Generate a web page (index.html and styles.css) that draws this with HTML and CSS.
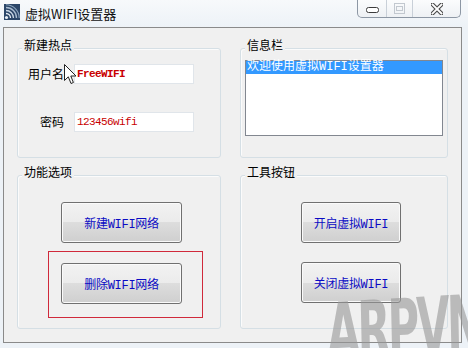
FILE: index.html
```html
<!DOCTYPE html>
<html>
<head>
    <title>虚拟WIFI设置器</title>
    <link rel="stylesheet" href="styles.css">
</head>
<body>
    <div class="window">
        <!-- Title bar -->
        <div class="titlebar">
            <svg class="appIcon" width="16" height="16" viewBox="0 0 16 16">
                <rect x="0" y="0" width="16" height="16" fill="#2b4668"/>
                <circle cx="2.5" cy="13.5" r="1.6" fill="#e8eef5"/>
                <path d="M2 9.5 A4.5 4.5 0 0 1 6.5 14" stroke="#e8eef5" stroke-width="1.3" fill="none"/>
                <path d="M2 6.5 A7.5 7.5 0 0 1 9.5 14" stroke="#c9d6e4" stroke-width="1.3" fill="none"/>
                <path d="M2 3.5 A10.5 10.5 0 0 1 12.5 14" stroke="#a9bcd1" stroke-width="1.3" fill="none"/>
                <path d="M2 0.8 A13.2 13.2 0 0 1 15.2 14" stroke="#8aa3bd" stroke-width="1.1" fill="none"/>
            </svg>
            <span class="title">虚拟WIFI设置器</span>
            <div class="captionButtons">
                <div class="capBtn minBtn">
                    <svg width="13" height="6" viewBox="0 0 13 6">
                        <rect x="0.5" y="0.5" width="12" height="5" rx="2" fill="#fff" stroke="#3c3c3c"/>
                    </svg>
                </div>
                <div class="capBtn maxBtn">
                    <svg width="11" height="11" viewBox="0 0 11 11">
                        <rect x="0.5" y="0.5" width="10" height="10" fill="none" stroke="#c2c8cf"/>
                        <rect x="2.5" y="3.5" width="6" height="4" fill="none" stroke="#c2c8cf"/>
                    </svg>
                </div>
                <div class="capBtn closeBtn">
                    <svg width="12" height="12" viewBox="0 0 12 12">
                        <path d="M1.5 1.5 L10.5 10.5 M10.5 1.5 L1.5 10.5" stroke="#4a4a4a" stroke-width="4" stroke-linecap="square"/>
                        <path d="M1.5 1.5 L10.5 10.5 M10.5 1.5 L1.5 10.5" stroke="#ffffff" stroke-width="1.8" stroke-linecap="square"/>
                    </svg>
                </div>
            </div>
        </div>

        <!-- Client area -->
        <div class="client">
            <div class="groupGrid">
                <div class="group hotspot">
                    <div class="legend">新建热点</div>
                    <div class="fieldRow firstRow">
                        <label class="fieldLabel" for="ssid">用户名</label>
                        <input class="textBox bold" id="ssid" type="text" value="FreeWIFI">
                    </div>
                    <div class="fieldRow secondRow">
                        <label class="fieldLabel" for="pwd">密码</label>
                        <input class="textBox" id="pwd" type="text" value="123456wifi">
                    </div>
                </div>

                <div class="group info">
                    <div class="legend">信息栏</div>
                    <div class="listBox">
                        <div class="listItem selected">欢迎使用虚拟WIFI设置器</div>
                    </div>
                </div>

                <div class="group options">
                    <div class="legend">功能选项</div>
                    <button class="winButton leftButton">新建WIFI网络</button>
                    <div class="highlightBox">
                        <button class="winButton">删除WIFI网络</button>
                    </div>
                </div>

                <div class="group tools">
                    <div class="legend">工具按钮</div>
                    <button class="winButton rightButton">开启虚拟WIFI</button>
                    <button class="winButton rightButton lower">关闭虚拟WIFI</button>
                </div>
            </div>
        </div>

        <!-- Mouse pointer over the username field -->
        <svg class="pointer" width="13" height="21" viewBox="0 0 13 21">
            <path d="M0.5 0.5 L0.5 16.5 L4.3 12.8 L7 19.5 L9.4 18.5 L6.8 12 L12 12 Z"
                  fill="#ffffff" stroke="#222" stroke-width="1" stroke-linejoin="round"/>
        </svg>

        <!-- Site watermark -->
        <div class="watermark">ARPVN</div>
    </div>
</body>
</html>
```

FILE: styles.css
```css
body {
    margin: 0;
    width: 468px;
    height: 348px;
    overflow: hidden;
    background: #edf2f7;
    font-family: "Noto Sans CJK SC", sans-serif;
    font-size: 12px;
    color: #000;
}

.window {
    position: relative;
    height: 348px;
    overflow: hidden;
}

/* Title bar */
.titlebar {
    display: flex;
    align-items: flex-start;
    height: 27px;
    background: linear-gradient(#f7f9fb, #edf2f7);
}

.appIcon {
    margin: 4px 0 0 4px;
}

.title {
    margin: 6px 0 0 5px;
    font-size: 13px;
    line-height: 16px;
    color: #111;
}

.captionButtons {
    display: flex;
    margin-left: auto;
    margin-right: 7px;
    height: 17px;
    border: 1px solid #8d97a4;
    border-top: none;
    border-radius: 0 0 5px 5px;
    background: linear-gradient(#fbfcfd, #eef1f4);
}

.capBtn {
    display: flex;
    justify-content: center;
    align-items: center;
    height: 17px;
}

.minBtn {
    width: 28px;
    border-right: 1px solid #c9d0d8;
}

.minBtn svg {
    margin-top: 3px;
}

.maxBtn {
    width: 25px;
    border-right: 1px solid #c9d0d8;
}

.closeBtn {
    width: 47px;
}

/* Client area */
.client {
    margin: 0 6px 0 3px;
    height: 316px;
    box-sizing: border-box;
    border: 1px solid #8a8a8a;
    background: #f0f0f0;
    padding: 20px 0 0 13px;
}

.groupGrid {
    display: grid;
    grid-template-columns: 204px 208px;
    grid-template-rows: 110px 154px;
    column-gap: 19px;
    row-gap: 17px;
}

.group {
    border: 1px solid #d5dfe5;
    border-radius: 3px;
    box-shadow: inset 1px 1px 0 #fbfbfb;
}

.legend {
    width: fit-content;
    margin: -10px 0 0 4px;
    padding: 0 2px;
    line-height: 12px;
    background: #f0f0f0;
}

/* Hotspot fields */
.fieldRow {
    display: flex;
    align-items: center;
}

.firstRow {
    margin-top: 13px;
}

.secondRow {
    margin-top: 28px;
}

.fieldLabel {
    width: 46px;
    text-align: right;
    line-height: 14px;
}

.textBox {
    width: 120px;
    height: 20px;
    box-sizing: border-box;
    margin: 0 0 0 10px;
    padding: 0 0 0 2px;
    border: 1px solid #e0e5ea;
    background: #fff;
    color: #c80000;
    font-family: "Liberation Mono", monospace;
    font-size: 11px;
    letter-spacing: -0.6px;
    outline: none;
}

.textBox.bold {
    font-weight: bold;
}

/* Info list */
.listBox {
    margin: 9px 0 0 4px;
    width: 198px;
    height: 76px;
    box-sizing: border-box;
    border: 1px solid #828790;
    background: #fff;
}

.listItem {
    height: 13px;
    line-height: 13px;
    padding-left: 1px;
    font-family: "Liberation Mono", "Noto Sans CJK SC", monospace;
    font-size: 12px;
    white-space: nowrap;
}

.listItem.selected {
    background: #3399ff;
    color: #fff;
}

/* Buttons */
.winButton {
    display: block;
    width: 121px;
    height: 41px;
    padding: 0;
    border: 1px solid #707070;
    border-radius: 3px;
    background: linear-gradient(#f2f2f2 0%, #ebebeb 50%, #dddddd 50%, #cfcfcf 100%);
    box-shadow: inset 0 0 0 1px #fafafa;
    color: #0b0bc4;
    font-family: "Liberation Mono", "Noto Sans CJK SC", monospace;
    font-size: 12px;
    letter-spacing: -0.3px;
}

.leftButton {
    margin: 24px 0 0 43px;
}

.highlightBox {
    width: fit-content;
    margin: 8px 0 0 30px;
    padding: 11px 20px 13px 12px;
    border: 1px solid #d0293b;
}

.rightButton {
    width: 100px;
    margin: 24px 0 0 60px;
}

.rightButton.lower {
    margin-top: 19px;
}

/* Things lying over the window */
.pointer {
    position: absolute;
    left: 64px;
    top: 64px;
}

.watermark {
    position: absolute;
    left: 326px;
    top: 293px;
    font-family: "DejaVu Sans Condensed", "DejaVu Sans", sans-serif;
    font-weight: bold;
    font-size: 52px;
    line-height: 52px;
    letter-spacing: -3px;
    color: rgba(150, 150, 150, 0.6);
    transform: scale(0.92, 1.5) rotate(-2deg);
    transform-origin: top left;
    white-space: nowrap;
}
```
